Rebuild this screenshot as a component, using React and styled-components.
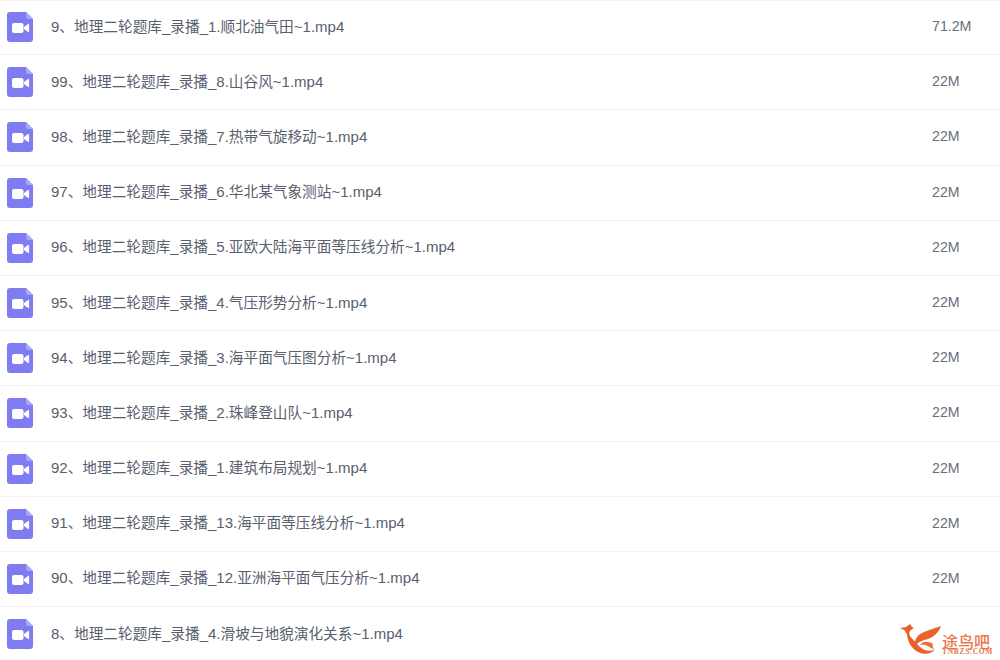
import React from "react";
import styled, { createGlobalStyle } from "styled-components";

const Global = createGlobalStyle`
  html, body { margin: 0; padding: 0; background: #fff; }
  body { width: 1000px; height: 660px; overflow: hidden; font-family: "Liberation Sans", "Noto Sans CJK SC", sans-serif; }
`;
const Page = styled.div`
  position: relative;
  width: 1000px;
  height: 660px;
  overflow: hidden;
  background: #fff;
`;
const List = styled.ul`
  list-style: none;
  margin: 0;
  padding: 0;
  border-top: 1px solid #f3f3f3;
`;
const Row = styled.li`
  box-sizing: border-box;
  height: 55.2px;
  display: grid;
  grid-template-columns: 51px 1fr 68px;
  align-items: center;
  border-bottom: 1px solid #f1f1f1;
  margin-top: ${p => (p.$first ? "-1px" : "0")};
`;
const IconCell = styled.span`
  display: flex;
  padding-left: 7px;
`;
const Name = styled.span`
  font-size: 15px;
  line-height: 20px;
  color: #58606e;
  white-space: nowrap;
  position: relative;
  top: -1px;
`;
const Cjk = styled.span`
  font-size: 14.67px;
  font-family: "Noto Sans CJK SC", sans-serif;
`;
const Size = styled.span`
  font-size: 14.2px;
  line-height: 20px;
  color: #6a6f78;
  position: relative;
  top: -1px;
`;
const Watermark = styled.div`
  position: absolute;
  left: 895px;
  top: 618px;
  display: flex;
  align-items: flex-start;
`;
const MarkText = styled.div`
  display: flex;
  flex-direction: column;
  margin: 17px 0 0 -3px;
  color: #e9764c;
`;
const MarkTitle = styled.span`
  font-size: 16px;
  line-height: 13px;
  height: 13px;
  font-weight: 500;
  font-family: "Noto Sans CJK SC", sans-serif;
`;
const MarkSub = styled.span`
  font-size: 7.5px;
  line-height: 7px;
  height: 7px;
  letter-spacing: 0.7px;
  font-weight: 700;
  white-space: nowrap;
  font-family: "Liberation Serif", serif;
`;

const FileIcon = () => (
  <svg width="26" height="30" viewBox="0 0 26 30">
    <path d="M3 0H19L26 7V27a3 3 0 0 1-3 3H3a3 3 0 0 1-3-3V3a3 3 0 0 1 3-3Z" fill="#7f7cf2" />
    <path d="M19 0L26 7H21a2 2 0 0 1-2-2Z" fill="#a9a7f7" />
    <rect x="5" y="11" width="11.500" height="10" rx="2" fill="#fff" />
    <path d="M17.500 15L21.600 12.200V19.800L17.500 17Z" fill="#fff" stroke="#fff" strokeLinejoin="round" />
  </svg>
);

const Logo = () => (
  <svg width="50" height="38" viewBox="0 0 50 38">
    <path d="M5 10L11 9L15 6L17 9L19 10L16 12C14 13 14 15 15 18C12 17 10 14 10 12.500Z" fill="#e8622c" />
    <path d="M12 15C12 25 18 33 27 35.500C33 36.500 37 35 39.500 32C33 34 28 32 24 28C20 24 16 19 12 15Z" fill="#e8622c" />
    <path d="M46 8C41 10 33 12 27 15C21 18 19 23 20 29C23 23 29 22 33 21C39 19 44 14 46 8Z" fill="#e8622c" />
    <path d="M25 27C28 23 34 23 38 26C37 28 38 30 39.500 32C36 30 34 28 30 27C28 26.500 27 26.500 25 27Z" fill="#ea6f36" />
  </svg>
);

const rows = [
  ["9、地理二轮题库_录播_1.顺北油气田~1.mp4", "71.2M"],
  ["99、地理二轮题库_录播_8.山谷风~1.mp4", "22M"],
  ["98、地理二轮题库_录播_7.热带气旋移动~1.mp4", "22M"],
  ["97、地理二轮题库_录播_6.华北某气象测站~1.mp4", "22M"],
  ["96、地理二轮题库_录播_5.亚欧大陆海平面等压线分析~1.mp4", "22M"],
  ["95、地理二轮题库_录播_4.气压形势分析~1.mp4", "22M"],
  ["94、地理二轮题库_录播_3.海平面气压图分析~1.mp4", "22M"],
  ["93、地理二轮题库_录播_2.珠峰登山队~1.mp4", "22M"],
  ["92、地理二轮题库_录播_1.建筑布局规划~1.mp4", "22M"],
  ["91、地理二轮题库_录播_13.海平面等压线分析~1.mp4", "22M"],
  ["90、地理二轮题库_录播_12.亚洲海平面气压分析~1.mp4", "22M"],
  ["8、地理二轮题库_录播_4.滑坡与地貌演化关系~1.mp4", ""],
];

const FileName = ({ text }) => (
  <Name>
    {text.split(/([\u3000-\u9fff]+)/).map((part, i) =>
      i % 2 ? <Cjk key={i}>{part}</Cjk> : part
    )}
  </Name>
);

export default function App() {
  return (
    <Page>
      <Global />
      <List>
        {rows.map(([name, size], i) => (
          <Row key={name} $first={i === 0}>
            <IconCell><FileIcon /></IconCell>
            <FileName text={name} />
            <Size>{size}</Size>
          </Row>
        ))}
      </List>
      <Watermark>
        <Logo />
        <MarkText>
          <MarkTitle>途鸟吧</MarkTitle>
          <MarkSub>TNBZS.COM</MarkSub>
        </MarkText>
      </Watermark>
    </Page>
  );
}
